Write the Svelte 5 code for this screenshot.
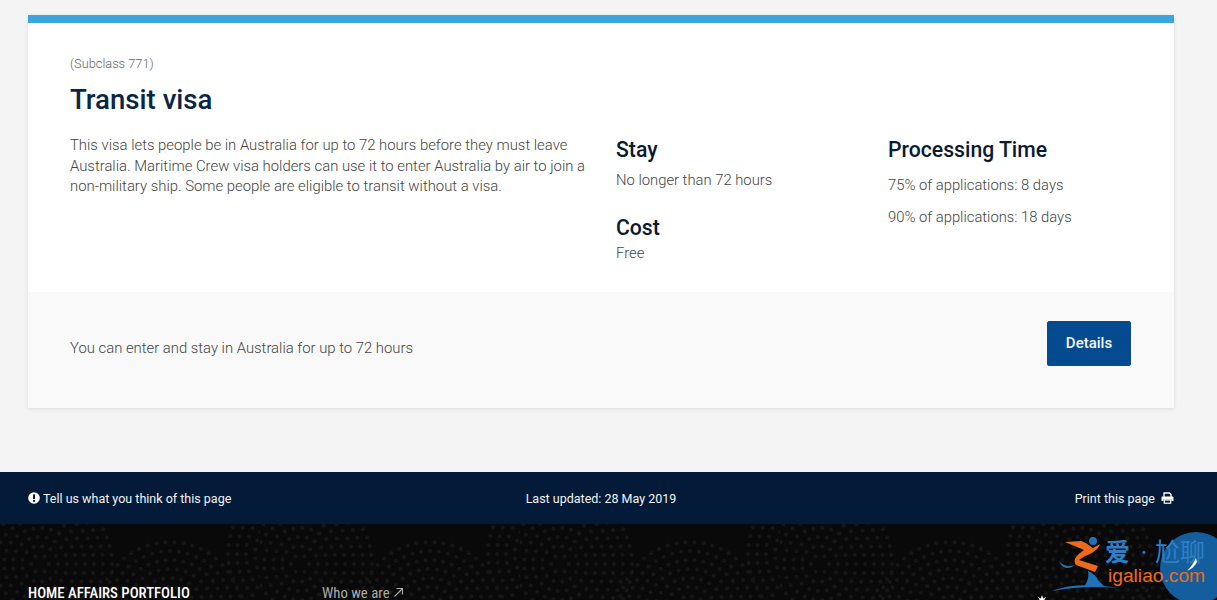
<script lang="ts">
	// each ring centre gets concentric circles of dots, about 9px apart
	const centres = [
		{ cx: 40, cy: 40 },
		{ cx: 170, cy: 90 },
		{ cx: 300, cy: 30 }
	];
	const radii = [9, 18, 27, 36, 45, 54, 63, 72];
	const dotsFor = (r: number) => Math.round((2 * Math.PI * r) / 9);
</script>

<main class="page">
	<section class="visa-card">
		<div class="visa-card__body">
			<p class="subclass">(Subclass 771)</p>
			<h1>Transit visa</h1>
			<div class="columns">
				<p class="summary">This visa lets people be in Australia for up to 72 hours before they must leave Australia. Maritime Crew visa holders can use it to enter Australia by air to join a non-military ship. Some people are eligible to transit without a visa.</p>
				<div class="facts">
					<h2>Stay</h2>
					<p class="stay">No longer than 72 hours</p>
					<h2>Cost</h2>
					<p class="free">Free</p>
				</div>
				<div class="processing">
					<h2>Processing Time</h2>
					<p>75% of applications: 8 days</p>
					<p>90% of applications: 18 days</p>
				</div>
			</div>
		</div>
		<div class="visa-card__foot">
			<p>You can enter and stay in Australia for up to 72 hours</p>
			<button type="button">Details</button>
		</div>
	</section>
</main>

<footer>
	<div class="footer-bar">
		<span class="bar-item">
			<svg width="12" height="12" viewBox="0 0 12 12" aria-hidden="true">
				<circle cx="6" cy="6" r="5.8" fill="#fff" />
				<rect x="5" y="2.4" width="2" height="4.6" fill="#031b39" />
				<rect x="5" y="8" width="2" height="1.8" fill="#031b39" />
			</svg>
			Tell us what you think of this page
		</span>
		<span class="updated">Last updated: 28 May 2019</span>
		<span class="bar-item">
			Print this page
			<svg width="13" height="12" viewBox="0 0 13 12" aria-hidden="true">
				<path d="M3 5V1h5.5L10 2.5V5" fill="none" stroke="#fff" stroke-width="1.3" />
				<path d="M1.5 4.6h10a1 1 0 0 1 1 1V9h-2V7.4h-8V9h-2V5.6a1 1 0 0 1 1-1z" fill="#fff" />
				<rect x="3.3" y="8" width="6.4" height="3.2" fill="none" stroke="#fff" stroke-width="1.2" />
			</svg>
		</span>
	</div>
	<div class="footer-main">
		<svg class="dots" width="1217" height="76" aria-hidden="true">
			<defs>
				<pattern id="rings" width="260" height="120" patternUnits="userSpaceOnUse">
					{#each centres as c}
						{#each radii as r}
							{#each Array(dotsFor(r)) as _, i}
								<circle
									cx={c.cx + r * Math.cos((i / dotsFor(r)) * Math.PI * 2)}
									cy={c.cy + r * Math.sin((i / dotsFor(r)) * Math.PI * 2)}
									r="2"
									fill="#161616"
								/>
							{/each}
						{/each}
					{/each}
				</pattern>
			</defs>
			<rect width="1217" height="76" fill="url(#rings)" />
		</svg>
		<div class="footer-links">
			<h3>HOME AFFAIRS PORTFOLIO</h3>
			<span class="link">
				Who we are
				<svg width="11" height="11" viewBox="0 0 11 11" aria-hidden="true">
					<path d="M1.5 9.5L9.5 1.5M3.5 1.5h6v6" fill="none" stroke="#aaa" stroke-width="1.1" />
				</svg>
			</span>
		</div>
		<svg class="star" width="12" height="12" viewBox="0 0 12 12" aria-hidden="true">
			<path d="M6 0l1.2 3.6L10.2 1.800 8.400 4.800 12 6 8.400 7.200 10.200 10.200 7.200 8.400 6 12 4.800 8.400 1.800 10.200 3.600 7.200 0 6 3.600 4.800 1.800 1.800 4.800 3.600z" fill="#fff" />
		</svg>
	</div>
	<!-- watermark that sits over the footer corner -->
	<div class="watermark">
		<div class="watermark__disc">
			<svg width="72" height="72" viewBox="0 0 72 72" aria-hidden="true">
				<path d="M36 26c-3 6-6 10-9 13 5-2 8-5 10-9l-1-4z" fill="#fff" />
			</svg>
		</div>
		<svg class="watermark__figure" width="76" height="62" viewBox="0 0 76 62" aria-hidden="true">
			<circle cx="42" cy="8" r="4" fill="#1e73b8" />
			<path d="M14 9L30 8C36 10 40 14 42 15L49 11C47 17 40 21 34 23L28 27L47 33L44 39L25 32C22 28 24 24 29 20L33 17C27 14 20 12 14 9z" fill="#ec6a1c" />
			<path d="M8 28C12 33 18 34 24 32C18 37 11 36 8 28z" fill="#1e73b8" />
			<path d="M37 38C42 40 46 44 47 47L54 54L33 54C37 48 38 43 37 38z" fill="#1e73b8" />
			<path d="M1 58C18 51 42 51 68 55C44 53 22 54 1 58z" fill="#1e73b8" />
		</svg>
		<span class="watermark__cn">爱</span>
		<span class="watermark__sep">·</span>
		<span class="watermark__cn watermark__cn--right">尬聊</span>
		<span class="watermark__url">igaliao.com</span>
	</div>
</footer>

<style>
	:global(body) {
		background: #f4f4f4;
		font-family: Roboto, "Liberation Sans", sans-serif;
		overflow: hidden;
	}

	.page {
		padding: 15px 43px 64px 28px;
	}

	.visa-card {
		border-top: 8px solid #3aa6dd;
		background: #fff;
		box-shadow: 0 1px 4px rgba(0, 0, 0, 0.1);
	}

	.visa-card__body {
		padding: 32px 42px 0;
		height: 269px;
		box-sizing: border-box;
	}

	.subclass {
		margin: 0;
		font-size: 12.8px;
		line-height: 18px;
		color: #666;
	}

	h1 {
		margin: 9px 0 0;
		font-size: 27.6px;
		font-weight: 500;
		line-height: 36px;
		color: #0b2545;
	}

	.columns {
		display: grid;
		grid-template-columns: 546px 272px 1fr;
		margin-top: 17px;
	}

	p {
		margin: 0;
		font-weight: 300;
		color: #444;
	}

	.summary {
		width: 520px;
		font-size: 14.87px;
		line-height: 20.5px;
	}

	h2 {
		margin: 0;
		font-size: 21.2px;
		font-weight: 500;
		line-height: 28px;
		color: #0a1a30;
	}

	.facts,
	.processing {
		margin-top: 1px;
	}

	.facts p,
	.processing p {
		font-size: 14.8px;
		line-height: 20px;
	}

	.stay {
		margin: 6px 0 24px;
	}

	.free {
		margin-top: 1px;
	}

	.processing h2 {
		margin-bottom: 11px;
	}

	.processing p {
		margin-bottom: 12px;
	}

	.visa-card__foot {
		display: flex;
		align-items: center;
		justify-content: space-between;
		height: 116px;
		box-sizing: border-box;
		padding: 0 43px 14px 42px;
		background: #f9f9f9;
	}

	.visa-card__foot p {
		margin-top: 10px;
		font-size: 14.85px;
	}

	button {
		width: 84px;
		height: 45px;
		border: 1px solid #0a4a8a;
		border-radius: 2px;
		background: #034a8f;
		color: #f4f8fc;
		font: 500 15px Roboto, sans-serif;
	}

	.footer-bar {
		display: flex;
		align-items: center;
		justify-content: space-between;
		height: 52px;
		padding: 0 43px 0 28px;
		background: #031b39;
		color: #f2f2f2;
		font-size: 12.5px;
	}

	.bar-item {
		display: flex;
		align-items: center;
		gap: 3px;
		width: 300px;
	}

	.bar-item:last-child {
		justify-content: flex-end;
		gap: 6px;
	}

	footer {
		position: relative;
	}

	.footer-main {
		position: relative;
		height: 76px;
		overflow: hidden;
		background: #090909;
	}

	.dots {
		position: absolute;
		inset: 0;
	}

	.footer-links {
		position: relative;
		display: flex;
		align-items: baseline;
		padding: 60px 0 0 28px;
	}

	h3 {
		width: 294px;
		margin: 0;
		font-size: 14.8px;
		font-weight: 500;
		font-stretch: condensed;
		line-height: 18px;
		color: #fff;
	}

	.link {
		font-size: 14.8px;
		font-stretch: condensed;
		line-height: 18px;
		color: #aaa;
	}

	.star {
		position: absolute;
		top: 71px;
		left: 1036px;
	}

	.watermark {
		position: absolute;
		top: 59px;
		left: 1051px;
		width: 166px;
		height: 69px;
		overflow: hidden;
	}

	.watermark__disc {
		position: absolute;
		top: 1px;
		left: 109px;
		width: 72px;
		height: 72px;
		border-radius: 50%;
		background: #155e9e;
	}

	.watermark__figure {
		position: absolute;
		top: 2px;
		left: 0;
	}

	.watermark__cn {
		position: absolute;
		top: 2px;
		left: 54px;
		font-family: "Noto Sans CJK SC", sans-serif;
		font-size: 25px;
		font-weight: 700;
		line-height: 34px;
		color: #2f7fc4;
		white-space: nowrap;
	}

	.watermark__cn--right {
		left: 104px;
		font-weight: 400;
	}

	.watermark__sep {
		position: absolute;
		top: 3px;
		left: 86px;
		font-family: "Noto Sans CJK SC", sans-serif;
		font-size: 14px;
		line-height: 34px;
		color: #2f7fc4;
	}

	.watermark__url {
		position: absolute;
		top: 35px;
		left: 57px;
		font-family: "Liberation Sans", sans-serif;
		font-size: 19.2px;
		line-height: 20px;
		color: #ee6b1e;
	}
</style>
